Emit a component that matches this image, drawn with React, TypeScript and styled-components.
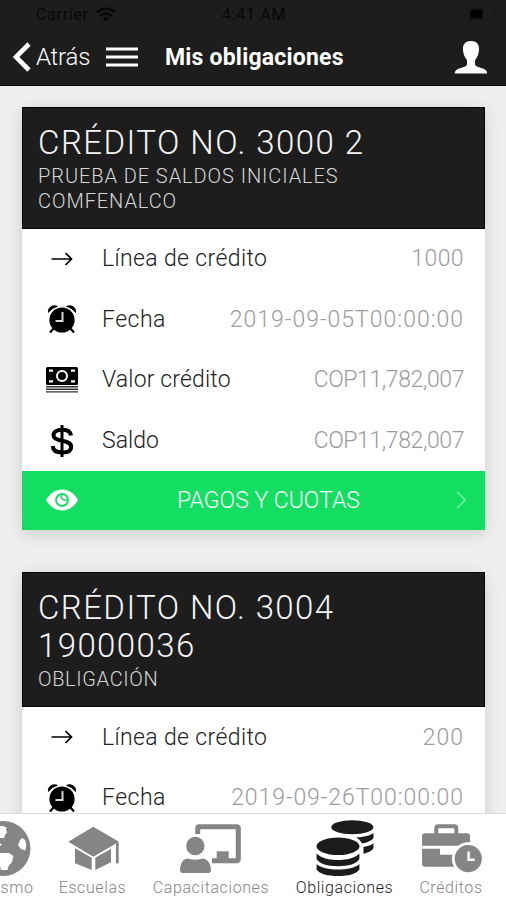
import React from 'react';
import styled, { createGlobalStyle } from 'styled-components';

const GlobalStyle = createGlobalStyle`
  * { box-sizing: border-box; }
  body { margin: 0; background: #efefef; font-family: Roboto, "Liberation Sans", sans-serif; }
  svg { display: block; flex: none; }
`;

const Screen = styled.div`
  display: flex;
  flex-direction: column;
  width: 506px;
  height: 900px;
  overflow: hidden;
  background: #efefef;
`;

const TopBar = styled.header`
  flex: none;
  height: 86px;
  background: #1d1d1d;
  border-bottom: 1px solid #050505;
`;

const StatusBar = styled.div`
  display: grid;
  grid-template-columns: 1fr auto 1fr;
  align-items: center;
  height: 28px;
  padding: 0 8px 0 10px;
  color: #080808;
  font-size: 16px;
  letter-spacing: 0.7px;
`;

const Carrier = styled.div`
  display: flex;
  align-items: center;
  gap: 7px;
  padding-left: 26px;
`;

const BatterySlot = styled.div`
  display: flex;
  justify-content: flex-end;
`;

const NavRow = styled.nav`
  display: flex;
  align-items: center;
  height: 58px;
  padding: 0 18px 0 12px;
  color: #fff;
`;

const BackLabel = styled.span`
  width: 75px;
  padding-left: 5px;
  font-size: 24px;
  font-weight: 300;
  letter-spacing: -0.2px;
`;

const NavTitle = styled.h1`
  flex: 1;
  margin: 0 0 0 27px;
  font-size: 23px;
  font-weight: 700;
  letter-spacing: 0.2px;
`;

const Content = styled.main`
  flex: 1;
  min-height: 0;
  display: flex;
  flex-direction: column;
  gap: 42px;
  padding: 21px 21px 0 22px;
  overflow: hidden;
`;

const Card = styled.section`
  flex: none;
  background: #fff;
  box-shadow: 0 4px 16px rgba(0, 0, 0, 0.14);
`;

const CardHeader = styled.div`
  padding: 16px 16px 14.5px 15px;
  background: #1d1d1d;
  border: 1px solid #060606;
`;

const CardTitle = styled.h2<{ $spacing: number }>`
  margin: 0;
  color: #f4f4f4;
  font-size: 33px;
  font-weight: 300;
  line-height: 38px;
  letter-spacing: ${p => p.$spacing}px;
`;

const CardSubtitle = styled.p<{ $spacing: number }>`
  margin: 2px 0 0;
  color: #d6d6d6;
  font-size: 20px;
  font-weight: 300;
  line-height: 24.5px;
  letter-spacing: ${p => p.$spacing}px;
`;

const Row = styled.div`
  display: flex;
  align-items: center;
  height: 60.6px;
  padding: 0 21px 0 20px;
`;

const IconCell = styled.div`
  display: flex;
  justify-content: center;
  width: 40px;
  margin-right: 20px;
`;

const RowLabel = styled.span<{ $spacing: number }>`
  flex: 1;
  color: #222;
  font-size: 23px;
  font-weight: 300;
  letter-spacing: ${p => p.$spacing}px;
`;

const RowValue = styled.span<{ $spacing: number }>`
  color: #9c9c9c;
  font-size: 23px;
  font-weight: 300;
  letter-spacing: ${p => p.$spacing}px;
`;

const Action = styled.div`
  display: flex;
  align-items: center;
  height: 59px;
  padding: 0 18px 0 20px;
  background: #13de61;
  color: #fff;
`;

const ActionLabel = styled.span`
  flex: 1;
  padding-right: 20px;
  text-align: center;
  font-size: 23px;
  font-weight: 300;
`;

const TabBar = styled.footer`
  flex: none;
  display: flex;
  gap: 26px;
  height: 87px;
  padding-top: 4px;
  border-top: 1px solid #dcdcdc;
  background: #fff;
`;

const Tab = styled.div<{ $active?: boolean; $width: number; $shift?: number }>`
  flex: none;
  display: flex;
  flex-direction: column;
  align-items: center;
  width: ${p => p.$width}px;
  margin-left: ${p => p.$shift ?? 0}px;
  color: ${p => (p.$active ? '#1b1b1b' : '#858585')};
`;

const TabLabel = styled.span`
  font-size: 16px;
  font-weight: 300;
  line-height: 20px;
  letter-spacing: 0.6px;
  white-space: nowrap;
`;

const ArrowIcon = () => (
  <svg width="22" height="14" viewBox="0 0 22 14" fill="none" stroke="#000" strokeWidth="1.7">
    <path d="M.5 7H20M14.5 1l6 6-6 6" />
  </svg>
);

const AlarmIcon = () => (
  <svg width="30" height="30" viewBox="0 0 30 30">
    <path d="M7 24l-4 4.5M23 24l4 4.5" stroke="#000" strokeWidth="2.2" />
    <circle cx="15" cy="16" r="12.6" />
    <path d="M1.500 8.400C.5 3.500 6 .4 10.400 2.400 6.500 3.500 3.800 5.500 1.500 8.400zM28.500 8.400C29.500 3.500 24 .4 19.600 2.400c3.900 1.100 6.600 3.100 8.900 6z" stroke="#000" strokeWidth="1" strokeLinejoin="round" />
    <path d="M15.500 8v9H8.500" fill="none" stroke="#d8d8d8" strokeWidth="2" />
  </svg>
);

const MoneyIcon = () => (
  <svg width="32" height="27" viewBox="0 0 32 27">
    <rect y="1" width="32" height="18" rx="1.500" />
    <circle cx="16" cy="10" r="5" fill="none" stroke="#fff" strokeWidth="2" />
    <path d="M3 3.500h4v2.200H3zM25 3.500h4v2.200h-4zM3 14.200h4v2.200H3zM25 14.200h4v2.200h-4z" fill="#fff" />
    <path d="M0 20.700h32M0 23.300h32M0 25.900h32" stroke="#333" strokeWidth="1.400" />
  </svg>
);

const DollarIcon = () => (
  <svg width="24" height="32" viewBox="0 0 24 32" fill="none" stroke="#000" strokeWidth="4">
    <path d="M12 0v32" strokeWidth="3" />
    <path d="M21 10.500C20.500 6.500 17 4.800 12.200 4.800 7 4.800 3.500 6.800 3.500 10.300c0 3.500 3.500 4.600 8.500 5.500 5.500 1 9.200 2.200 9.200 6.200 0 3.600-3.700 5.500-9 5.500-5.500 0-9.200-2-9.500-6.500" />
  </svg>
);

const EyeIcon = () => (
  <svg width="32" height="22" viewBox="0 0 32 22">
    <path d="M0 11C4 4 9.500.5 16 .5S28 4 32 11c-4 7-9.500 10.500-16 10.500S4 18 0 11z" fill="#fff" />
    <circle cx="16" cy="11" r="6" fill="none" stroke="#13de61" strokeWidth="1.800" />
    <path d="M15.300 5.500c-1.200 3.500 1.500 6.500 5.700 5.300" fill="none" stroke="#13de61" strokeWidth="1.500" />
  </svg>
);

const ChevronRight = () => (
  <svg width="12" height="20" viewBox="0 0 12 20" fill="none" stroke="#6df09c" strokeWidth="1.700">
    <path d="M2 1.500l8 8.500-8 8.500" />
  </svg>
);

const BackIcon = () => (
  <svg width="19" height="30" viewBox="0 0 19 30" fill="none" stroke="#fff" strokeWidth="4.600">
    <path d="M17 2L4 15l13 13" />
  </svg>
);

const MenuIcon = () => (
  <svg width="32" height="20" viewBox="0 0 32 20" stroke="#fff" strokeWidth="3" strokeLinecap="butt">
    <path d="M0 2h32M0 10h32M0 18h32" />
  </svg>
);

const PersonIcon = () => (
  <svg width="34" height="34" viewBox="0 0 34 34" fill="#fff">
    <path d="M17 1c5.500 0 8.300 3.300 8 8.800-.2 4.300-1.700 7.500-3.500 9.700-.8 1-.9 5 .2 6.200C24 28 33 27.500 33.300 33.500H.7C1 27.500 10 28 12.300 25.700c1.100-1.200 1-5.200.2-6.200-1.800-2.200-3.300-5.400-3.500-9.700C8.700 4.300 11.500 1 17 1z" />
  </svg>
);

const WifiIcon = () => (
  <svg width="20" height="15" viewBox="0 0 20 15" fill="none" stroke="#080808" strokeWidth="2.600">
    <path d="M1 5.500c5-5 13-5 18 0M4.300 9c3.400-3.200 8-3.200 11.400 0" />
    <path d="M10 14.500L6.800 11.300c2-1.500 4.400-1.500 6.400 0z" fill="#080808" stroke="none" />
  </svg>
);

const BatteryIcon = () => (
  <svg width="30" height="14" viewBox="0 0 30 14">
    <rect x="1" y=".8" width="25" height="12.400" rx="3" fill="none" stroke="#171717" strokeWidth="1.300" />
    <rect x="2.500" y="2.500" width="12" height="9" rx="1.500" fill="#020202" />
    <path d="M28 5v4" stroke="#171717" strokeWidth="1.500" />
  </svg>
);

const GlobeIcon = () => (
  <svg width="64" height="60" viewBox="0 0 64 60">
    <circle cx="32" cy="30.500" r="27.500" fill="currentColor" />
    <path d="M26 8h6l3.500 1.500-.5 2 1 3-2 2.500-1 3H26zM51 20l3 2 1.300 4.500-.8 6-4.500-1.500L47 27l2-5zM22 24c4-1 7 1 9 3l-5 2zM22 35h16l4.500 3-1.500 6-3.500 4-1 4H30l-2-8-6-3z" fill="#fff" />
  </svg>
);

const SchoolIcon = () => (
  <svg width="64" height="60" viewBox="1 0 64 60" fill="currentColor">
    <path d="M8.300 23.700l25-15 25.700 15-25.700 15zM15 30.300v15L31.700 52V39.700zM35.300 39.700V52L51 44.300V30.700zM55.900 24.700h2.800v20.600h-2.800z" />
  </svg>
);

const TrainingIcon = () => (
  <svg width="64" height="60" viewBox="1 0 64 60" fill="currentColor">
    <path d="M19.700 16V10.200a1.500 1.500 0 0 1 1.500-1.500h37.600a1.500 1.500 0 0 1 1.500 1.500v31a1.500 1.500 0 0 1-1.500 1.500H34" fill="none" stroke="currentColor" strokeWidth="5" />
    <path d="M38.700 33.300h12v8h-12z" />
    <circle cx="17.300" cy="28" r="9.200" />
    <path d="M2 52c0-6 3-11.500 8-11.500 3 1.500 11.500 1.500 14.500 0 5 0 8.500 5.500 8.500 11.500 0 2-1 3-3 3H5c-2 0-3-1-3-3z" />
  </svg>
);

const CoinsIcon = () => (
  <svg width="64" height="60" viewBox="1 0 64 60" fill="currentColor">
    <ellipse cx="40.300" cy="9.300" rx="21" ry="7" />
    <path d="M44 19.500c8-.3 14-2 17.500-4.500v4.500c-1 2.800-5 4.800-11.500 6-1.300-2.600-3-4.500-6-6zM51.500 29c4.500-.8 8-2 10-3.800v4.500c-1 2.700-4.500 4.600-10 6z" />
    <ellipse cx="26" cy="28.300" rx="21.500" ry="8.700" />
    <path d="M4.600 35.500C9 40 17 42 26 42s17-2 21.400-6.500V41c-3 5-11 7.200-21.400 7.200S7.600 46 4.600 41zM4.600 46C9 50 17 51.500 26 51.500S43 50 47.400 46v5.500c-3 4.500-11 6.500-21.400 6.500S7.600 56 4.600 51.500z" />
  </svg>
);

const BriefcaseIcon = () => (
  <svg width="64" height="60" viewBox="0 0 64 60" fill="currentColor">
    <path d="M17.300 17V10.300a2 2 0 0 1 2-2h16a2 2 0 0 1 2 2V17" fill="none" stroke="currentColor" strokeWidth="4" />
    <path d="M6 15.300h42a3 3 0 0 1 3 3v9.400H3v-9.400a3 3 0 0 1 3-3zM3 30.700h18v6h16v12H6a3 3 0 0 1-3-3z" />
    <circle cx="49.300" cy="40.700" r="15" stroke="#fff" strokeWidth="2.800" />
    <path d="M49.600 33.500v8.300h6" fill="none" stroke="#fff" strokeWidth="2.500" />
  </svg>
);

type RowData = { icon: React.ReactNode; label: string; labelSpacing: number; value: string; valueSpacing: number };

const Details = ({ rows }: { rows: RowData[] }) => (
  <>
    {rows.map(r => (
      <Row key={r.label}>
        <IconCell>{r.icon}</IconCell>
        <RowLabel $spacing={r.labelSpacing}>{r.label}</RowLabel>
        <RowValue $spacing={r.valueSpacing}>{r.value}</RowValue>
      </Row>
    ))}
  </>
);

const firstRows: RowData[] = [
  { icon: <ArrowIcon />, label: 'Línea de crédito', labelSpacing: 0.37, value: '1000', valueSpacing: 0.4 },
  { icon: <AlarmIcon />, label: 'Fecha', labelSpacing: 0.5, value: '2019-09-05T00:00:00', valueSpacing: 1 },
  { icon: <MoneyIcon />, label: 'Valor crédito', labelSpacing: 0.15, value: 'COP11,782,007', valueSpacing: -0.4 },
  { icon: <DollarIcon />, label: 'Saldo', labelSpacing: 0, value: 'COP11,782,007', valueSpacing: -0.4 },
];

const secondRows: RowData[] = [
  { icon: <ArrowIcon />, label: 'Línea de crédito', labelSpacing: 0.37, value: '200', valueSpacing: 1 },
  { icon: <AlarmIcon />, label: 'Fecha', labelSpacing: 0.5, value: '2019-09-26T00:00:00', valueSpacing: 0.93 },
];

export default function App() {
  return (
    <>
      <GlobalStyle />
      <Screen>
        <TopBar>
          <StatusBar>
            <Carrier>Carrier <WifiIcon /></Carrier>
            <span>4:41 AM</span>
            <BatterySlot><BatteryIcon /></BatterySlot>
          </StatusBar>
          <NavRow>
            <BackIcon />
            <BackLabel>Atrás</BackLabel>
            <MenuIcon />
            <NavTitle>Mis obligaciones</NavTitle>
            <PersonIcon />
          </NavRow>
        </TopBar>
        <Content>
          <Card>
            <CardHeader>
              <CardTitle $spacing={1.45}>CRÉDITO NO. 3000 2</CardTitle>
              <CardSubtitle $spacing={0.93}>PRUEBA DE SALDOS INICIALES<br />COMFENALCO</CardSubtitle>
            </CardHeader>
            <Details rows={firstRows} />
            <Action>
              <IconCell><EyeIcon /></IconCell>
              <ActionLabel>PAGOS Y CUOTAS</ActionLabel>
              <ChevronRight />
            </Action>
          </Card>
          <Card>
            <CardHeader>
              <CardTitle $spacing={1.4}>CRÉDITO NO. 3004<br />19000036</CardTitle>
              <CardSubtitle $spacing={0.65}>OBLIGACIÓN</CardSubtitle>
            </CardHeader>
            <Details rows={secondRows} />
          </Card>
        </Content>
        <TabBar>
          <Tab $width={60} $shift={-27.5}><GlobeIcon /><TabLabel>Turismo</TabLabel></Tab>
          <Tab $width={68}><SchoolIcon /><TabLabel>Escuelas</TabLabel></Tab>
          <Tab $width={117}><TrainingIcon /><TabLabel>Capacitaciones</TabLabel></Tab>
          <Tab $width={98} $active><CoinsIcon /><TabLabel>Obligaciones</TabLabel></Tab>
          <Tab $width={63}><BriefcaseIcon /><TabLabel>Créditos</TabLabel></Tab>
        </TabBar>
      </Screen>
    </>
  );
}
